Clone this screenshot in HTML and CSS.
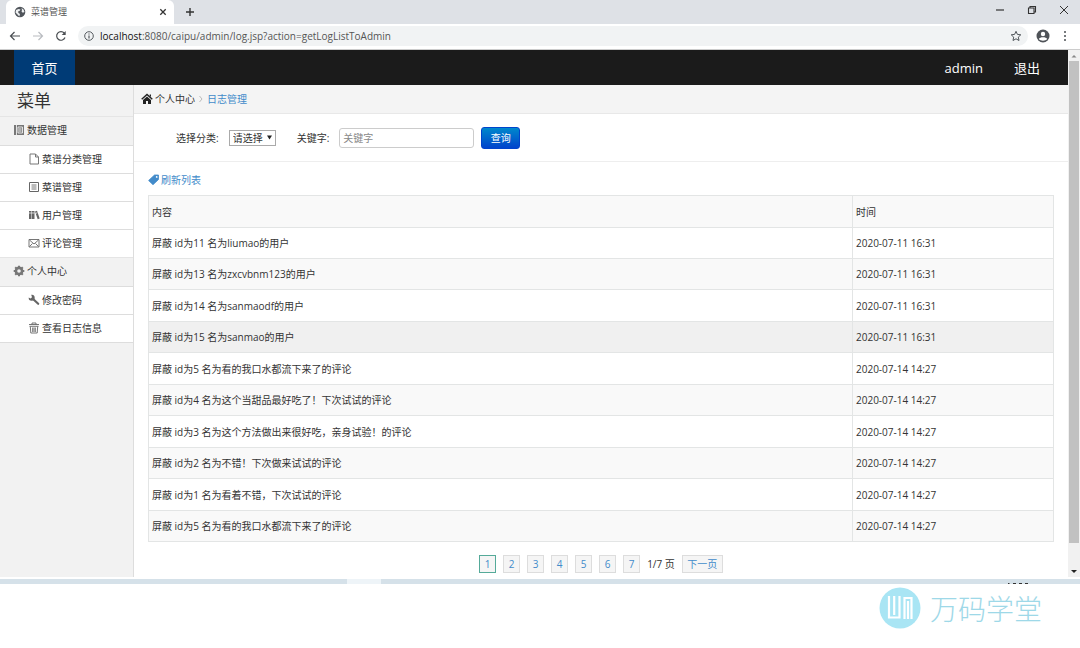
FILE: index.html
```html
<!DOCTYPE html>
<html lang="zh-CN">
<head>
<meta charset="utf-8">
<title>菜谱管理</title>
<link rel="stylesheet" href="styles.css">
</head>
<body>
<div class="browser">
  <div class="tabstrip">
    <div class="tab">
      <svg class="globe" viewBox="0 0 12 12"><circle cx="6" cy="6" r="5.3" fill="#50555b"/><path d="M2 4l2.500-1 2 .6L5.500 5 4 5.500l.5 1.600L6 8l-.7 2.400L3.500 8.600 1.500 6.500zM7.500 2l2 1.500 1 2.500-1.700.8L7.500 5.500 8 4z" fill="#eef0f2"/></svg>
      <span class="tab-title">菜谱管理</span>
      <button class="plain" aria-label="关闭标签页"><svg class="tiny" viewBox="0 0 8 8"><path d="M1.300 1.300l5.400 5.400M6.700 1.300L1.300 6.700" stroke="#333" stroke-width="1.300"/></svg></button>
    </div>
    <button class="plain new-tab" aria-label="新标签页"><svg class="small" viewBox="0 0 10 10"><path d="M5 1v8M1 5h8" stroke="#333" stroke-width="1.400"/></svg></button>
    <div class="window-buttons">
      <button class="plain" aria-label="最小化"><svg class="small" viewBox="0 0 10 10"><path d="M1 5h8" stroke="#333" stroke-width="1.200"/></svg></button>
      <button class="plain" aria-label="还原"><svg class="small" viewBox="0 0 10 10"><path d="M1.500 3h5.500v5.500H1.500zM3 3V1.500h5.500V7H7" fill="none" stroke="#333" stroke-width="1.100"/></svg></button>
      <button class="plain" aria-label="关闭"><svg class="small" viewBox="0 0 10 10"><path d="M1 1l8 8M9 1L1 9" stroke="#333"/></svg></button>
    </div>
  </div>
  <div class="toolbar">
    <button class="plain" aria-label="后退"><svg class="mid" viewBox="0 0 12 12"><path d="M11 6H1.500M5.500 2L1.500 6l4 4" fill="none" stroke="#4a4e52" stroke-width="1.200"/></svg></button>
    <button class="plain" aria-label="前进"><svg class="mid" viewBox="0 0 12 12"><path d="M1 6h9.500M6.500 2l4 4-4 4" fill="none" stroke="#b9bcc0" stroke-width="1.200"/></svg></button>
    <button class="plain" aria-label="刷新"><svg class="mid" viewBox="0 0 12 12"><path d="M10 7.500A4.300 4.300 0 1 1 9.300 3.200" fill="none" stroke="#4a4e52" stroke-width="1.200"/><path d="M10.700 1v4H6.700z" fill="#4a4e52"/></svg></button>
    <div class="omnibox">
      <svg class="small" viewBox="0 0 10 10"><circle cx="5" cy="5" r="4.300" fill="none" stroke="#555a5f"/><path d="M5 4.500v3M5 2.500v1.100" stroke="#555a5f" stroke-width="1.200"/></svg>
      <span class="url"><b>localhost</b>:8080/caipu/admin/log.jsp?action=getLogListToAdmin</span>
      <svg class="mid" viewBox="0 0 12 12"><path d="M6 1.300l1.400 3.100 3.400.4-2.500 2.300.7 3.400L6 8.800l-3 1.700.7-3.400L1.200 4.800l3.400-.4z" fill="none" stroke="#50555a"/></svg>
    </div>
    <svg class="avatar" viewBox="0 0 14 14"><circle cx="7" cy="7" r="6.500" fill="#4f5358"/><circle cx="7" cy="5" r="2.200" fill="#fff"/><path d="M2.800 10c1-2.400 7.400-2.400 8.400 0-1.800 2.200-6.600 2.200-8.400 0z" fill="#fff"/></svg>
    <svg class="dots" viewBox="0 0 4 12"><g fill="#4a4e52"><circle cx="2" cy="2" r="1"/><circle cx="2" cy="6" r="1"/><circle cx="2" cy="10" r="1"/></g></svg>
  </div>
</div>

<div class="viewport">
  <div class="page">
    <header class="topbar">
      <a class="home" href="#">首页</a>
      <nav class="account"><a href="#">admin</a><a href="#">退出</a></nav>
    </header>
    <div class="body">
      <aside class="sidebar">
        <h1>菜单</h1>
        <h2><svg class="icon" viewBox="0 0 12 12"><path d="M1 1h10v10H1z" fill="#777"/><path d="M3.500 1v10M5 3h4.500v6H5z" fill="none" stroke="#eee" stroke-width=".9"/><path d="M6 5h2.500M6 7h2.500" stroke="#eee"/></svg>数据管理</h2>
        <ul>
          <li><a href="#"><svg class="icon" viewBox="0 0 12 12"><path d="M2 1h5.500L10.500 4v7H2zM7.500 1v3h3" fill="none" stroke="#777"/></svg>菜谱分类管理</a></li>
          <li><a href="#"><svg class="icon" viewBox="0 0 12 12"><path d="M1.500 1.500h9v9h-9z" fill="none" stroke="#666"/><path d="M3.500 4h5M3.500 6h5M3.500 8h5" stroke="#777"/></svg>菜谱管理</a></li>
          <li><a href="#"><svg class="icon" viewBox="0 0 12 12"><path d="M1 2h2.500v8H1zM4 2h2.500v8H4zM7 2.500l2-.7L11.700 9.500l-2 .7z" fill="#666"/><path d="M1 4h5.500M7.300 4.500l2-.7" stroke="#fff" stroke-width=".7"/></svg>用户管理</a></li>
          <li><a href="#"><svg class="icon" viewBox="0 0 12 12"><path d="M1 2.500h10v7.500H1zM1.500 3L6 7l4.500-4M1.500 9.500l3-3M10.500 9.500l-3-3" fill="none" stroke="#666" stroke-width=".9"/></svg>评论管理</a></li>
        </ul>
        <h2><svg class="icon" viewBox="0 0 12 12"><circle cx="6" cy="6" r="3.100" fill="none" stroke="#777" stroke-width="2.600"/><path d="M6 .7v2M6 9.300v2M.7 6h2M9.300 6h2M2.200 2.200l1.300 1.300M8.500 8.500l1.300 1.300M9.800 2.200L8.500 3.500M3.500 8.500L2.200 9.800" stroke="#777" stroke-width="2"/></svg>个人中心</h2>
        <ul>
          <li><a href="#"><svg class="icon" viewBox="0 0 12 12"><path d="M4.800 4.800l5.400 5" stroke="#666" stroke-width="2.200" stroke-linecap="round"/><path d="M3.200.8A3 3 0 1 1 .7 3.500L2.600 4.500 4 3.200z" fill="#666"/></svg>修改密码</a></li>
          <li><a href="#"><svg class="icon" viewBox="0 0 12 12"><path d="M1 2.500h10M4 2.300V1h4v1.300M1.500 4.300h9M2.300 4.500l.5 6.500h6.400l.5-6.500M4.700 5.500V10M6 5.500V10M7.300 5.500V10" fill="none" stroke="#666" stroke-width=".9"/></svg>查看日志信息</a></li>
        </ul>
      </aside>
      <main class="content">
        <div class="crumbs">
          <svg class="icon" viewBox="0 0 12 12"><path d="M.7 6.300L6 1.500l5.300 4.800" fill="none" stroke="#222" stroke-width="1.400"/><path d="M2 7l4-3.600L10 7v4H7V8H5v3H2zM8.700 1.500H10V4L8.700 3z" fill="#222"/></svg>
          <span>个人中心</span>
          <svg class="chevron" viewBox="0 0 4 8"><path d="M.5 1l2.500 3-2.500 3" fill="none" stroke="#bbb"/></svg>
          <a href="#">日志管理</a>
        </div>
        <form class="search">
          <label for="category">选择分类:</label>
          <div class="picker">
            <select id="category"><option>请选择</option></select>
            <svg class="caret" viewBox="0 0 5 5"><path d="M0 .5h5L2.500 4.500z" fill="#222"/></svg>
          </div>
          <label class="second" for="keyword">关键字:</label>
          <input id="keyword" type="text" placeholder="关键字">
          <button type="button" class="submit">查询</button>
        </form>
        <section class="listing">
          <a class="refresh" href="#"><svg class="icon" viewBox="0 0 12 12"><path d="M6.500 1H10.500v4.500L5 10.700.6 6.500z" fill="#428bca" stroke="#428bca" stroke-linejoin="round" stroke-width=".8"/><circle cx="8.700" cy="2.900" r=".9" fill="#fff"/></svg>刷新列表</a>
          <table>
            <thead><tr><th>内容</th><th class="time">时间</th></tr></thead>
            <tbody>
              <tr><td>屏蔽 id为11 名为liumao的用户</td><td>2020-07-11 16:31</td></tr>
              <tr><td>屏蔽 id为13 名为zxcvbnm123的用户</td><td>2020-07-11 16:31</td></tr>
              <tr><td>屏蔽 id为14 名为sanmaodf的用户</td><td>2020-07-11 16:31</td></tr>
              <tr class="hovered"><td>屏蔽 id为15 名为sanmao的用户</td><td>2020-07-11 16:31</td></tr>
              <tr><td>屏蔽 id为5 名为看的我口水都流下来了的评论</td><td>2020-07-14 14:27</td></tr>
              <tr><td>屏蔽 id为4 名为这个当甜品最好吃了！下次试试的评论</td><td>2020-07-14 14:27</td></tr>
              <tr><td>屏蔽 id为3 名为这个方法做出来很好吃，亲身试验！的评论</td><td>2020-07-14 14:27</td></tr>
              <tr><td>屏蔽 id为2 名为不错！下次做来试试的评论</td><td>2020-07-14 14:27</td></tr>
              <tr><td>屏蔽 id为1 名为看着不错，下次试试的评论</td><td>2020-07-14 14:27</td></tr>
              <tr><td>屏蔽 id为5 名为看的我口水都流下来了的评论</td><td>2020-07-14 14:27</td></tr>
            </tbody>
          </table>
          <nav class="pager">
            <a class="current" href="#">1</a><a href="#">2</a><a href="#">3</a><a href="#">4</a><a href="#">5</a><a href="#">6</a><a href="#">7</a>
            <span>1/7 页</span>
            <a class="next" href="#">下一页</a>
          </nav>
        </section>
      </main>
    </div>
  </div>
  <div class="scrollbar">
    <svg class="arrow" viewBox="0 0 10 10"><path d="M2.500 6.500L5 4l2.500 2.500z" fill="#888"/></svg>
    <div class="thumb"></div>
    <svg class="arrow" viewBox="0 0 10 10"><path d="M2 4h6L5 7z" fill="#222"/></svg>
  </div>
</div>
<div class="taskbar">
  <div class="task"></div>
  <svg class="tray" viewBox="0 0 22 2"><path d="M1 1.500h1.500M6 1.500h3M12 1.500h3M18 1.500h3" stroke="#333"/></svg>
</div>
<footer class="brand">
  <svg class="logo" viewBox="0 0 42 42"><circle cx="21" cy="21" r="20.500" fill="#a9e5f4"/><path d="M10 9v21.500h10.500V9M15.200 9v19M25.500 32V11h7v21M29 14v18" fill="none" stroke="#fff" stroke-width="2.200"/></svg>
  <span>万码学堂</span>
</footer>
</body>
</html>
```
FILE: styles.css
```css
* { box-sizing: border-box; }
body {
  margin: 0;
  min-height: 100vh;
  background: #fff;
  color: #333;
  font: 10px/16px "Open Sans", "Noto Sans CJK SC", sans-serif;
}
a { color: #428bca; text-decoration: none; }
svg { display: block; flex: none; }
.plain { display: flex; padding: 0; border: 0; background: none; }
.tiny { width: 8px; height: 8px; }
.small { width: 10px; height: 10px; }
.mid { width: 12px; height: 12px; }

.tabstrip { display: flex; align-items: center; height: 24px; padding-left: 6px; background: #dee1e6; }
.tab { display: flex; align-items: center; align-self: stretch; width: 168px; padding: 0 7px 0 8px; gap: 5px; background: #fff; border-radius: 6px 6px 0 0; }
.globe { width: 12px; height: 12px; }
.tab-title { flex: 1; font-size: 9px; color: #555; }
.new-tab { margin-left: 11px; }
.window-buttons { display: flex; gap: 22px; margin: 0 11px 4px auto; }
.toolbar { display: flex; align-items: center; gap: 11px; height: 26px; padding: 0 13px 2px 9px; border-bottom: 1px solid #ccc; }
.omnibox { display: flex; flex: 1; align-items: center; gap: 6px; height: 20px; padding: 0 6px; border-radius: 10px; background: #f1f3f4; }
.url { flex: 1; color: #555; }
.url b { font-weight: 400; color: #111; }
.avatar { width: 14px; height: 14px; margin-left: -3px; }
.dots { width: 4px; height: 12px; margin-left: 2px; }

.viewport { display: flex; }
.page { display: flex; flex: 1; flex-direction: column; }
.topbar { display: flex; height: 35px; padding: 0 28px 0 14px; background: #1b1b1b; }
.topbar a { color: #fff; font-size: 13px; line-height: 36px; }
.home { width: 61px; background: #003b76; text-align: center; }
.account { display: flex; gap: 31px; margin-left: auto; }
.body { display: flex; flex: 1; }
.sidebar { width: 134px; border-right: 1px solid #ddd; background: #f2f2f2; }
.sidebar h1 { margin: 0; padding-left: 17px; font-size: 17px; font-weight: 400; line-height: 31px; }
.sidebar h2 { display: flex; align-items: center; gap: 2px; height: 29px; margin: 0; padding: 0 0 2px 13px; border-top: 1px solid #e5e5e5; font-size: 10px; font-weight: 400; }
.sidebar ul { margin: 0; padding: 0; list-style: none; }
.sidebar li { height: 28px; border-top: 1px solid #ddd; background: #fff; }
.sidebar ul:last-child li:last-child { height: 29px; border-bottom: 1px solid #ddd; }
.sidebar a { display: flex; align-items: center; gap: 2px; height: 25px; padding-left: 28px; color: #333; }
.icon { width: 12px; height: 12px; }
.content { flex: 1; background: #fff; }
.crumbs { display: flex; align-items: center; gap: 4px; height: 29px; padding-left: 7px; border-bottom: 1px solid #e8e8e8; background: #f4f4f4; }
.crumbs .icon { margin-right: -2px; }
.chevron { width: 4px; height: 8px; }
.search { display: flex; align-items: center; height: 48px; padding: 0 0 0 42px; border-bottom: 1px solid #eee; }
.picker { display: grid; width: 47px; margin-left: 10px; }
.picker > * { grid-area: 1 / 1; }
.picker select { appearance: none; height: 16px; padding: 0 3px; border: 1px solid #aaa; border-radius: 0; background: #fff; color: #333; font: inherit; line-height: 14px; }
.caret { width: 5px; height: 5px; margin-right: 4px; place-self: center end; pointer-events: none; }
.second { margin-left: 21px; }
.search input { width: 135px; height: 20px; margin-left: 10px; padding: 0 3px; border: 1px solid #ccc; border-radius: 3px; font: inherit; }
.search input::placeholder { color: #888; }
.submit { width: 39px; height: 22px; margin-left: 7px; padding: 0; border: 1px solid #04c; border-radius: 3px; background: linear-gradient(#08c, #04c); color: #fff; font: inherit; }
.listing { padding: 10px 14px 4px 14px; }
.refresh { display: flex; align-items: center; width: max-content; gap: 1px; height: 16px; margin-bottom: 7px; }
table { width: 100%; table-layout: fixed; border-collapse: collapse; }
th, td { height: 31px; padding: 0 3px; border: 1px solid #e3e5e5; font-weight: 400; text-align: left; }
th, tbody tr:nth-child(odd) td { height: 32px; }
tbody tr:nth-child(1) td { height: 31px; }
.time { width: 201px; }
thead, tbody tr:nth-child(even) { background: #f9f9f9; }
tbody .hovered:nth-child(even) { background: #f0f0f0; }
.pager { display: flex; align-items: center; justify-content: center; gap: 7px; margin-top: 13px; }
.pager a { width: 17px; height: 18px; border: 1px solid #ddd; background: #f5f5f5; text-align: center; }
.pager .current { border-color: #5a9; }
.pager .next { width: 41px; }

.scrollbar { display: flex; flex-direction: column; width: 12px; padding: 1px; background: #f1f1f1; }
.arrow { width: 10px; height: 10px; }
.thumb { flex: 1; margin-bottom: 23px; background: #c1c1c1; }
.taskbar { display: flex; height: 5px; margin-top: 2px; background: #d5e1e9; }
.task { width: 34px; margin-left: 347px; background: #eef4f8; }
.tray { width: 22px; height: 2px; margin: 3px 51px 0 auto; }
.brand { display: flex; align-items: center; justify-content: flex-end; gap: 9px; padding: 3px 38px 0 0; color: #9ed8e8; }
.brand span { font-size: 28px; font-weight: 300; line-height: 42px; font-family: "Noto Sans CJK SC", sans-serif; }
.logo { width: 42px; height: 42px; }
```
